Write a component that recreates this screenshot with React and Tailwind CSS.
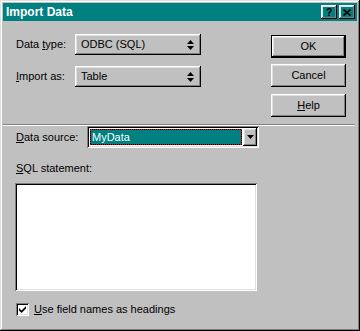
const raised =
  "shadow-[inset_-1px_-1px_#000,inset_1px_1px_#fff,inset_-2px_-2px_#808080,inset_2px_2px_#dfdfdf]";
const sunken =
  "shadow-[inset_1px_1px_#808080,inset_-1px_-1px_#fff,inset_2px_2px_#000,inset_-2px_-2px_#dfdfdf]";

function UpDown() {
  return (
    <svg width="7" height="10" viewBox="0 0 7 10" className="shrink-0">
      <path d="M3.5 0L7 4H0Z" fill="#000" />
      <path d="M0 6H7L3.5 10Z" fill="#000" />
    </svg>
  );
}

function Select({ value }) {
  return (
    <div className={`w-[126px] h-[21px] bg-[#c0c0c0] ${raised} flex items-center pl-[6px] pr-[7px]`}>
      <span className="flex-1">{value}</span>
      <UpDown />
    </div>
  );
}

function Button({ children, def }) {
  if (def) {
    return (
      <div className="w-[75px] h-[23px] border border-black">
        <div className={`h-full ${raised} flex items-center justify-center`}>{children}</div>
      </div>
    );
  }
  return (
    <div className={`w-[75px] h-[23px] ${raised} flex items-center justify-center`}>{children}</div>
  );
}

export default function App() {
  return (
    <div className="w-[360px] h-[331px] bg-[#c0c0c0] p-[3px] flex flex-col text-[11px] text-black font-['Liberation_Sans',Arial,sans-serif] shadow-[inset_-1px_-1px_#000,inset_1px_1px_#dfdfdf,inset_-2px_-2px_#808080,inset_2px_2px_#fff] leading-none">
      {/* title bar */}
      <div className="h-[18px] bg-[#008080] flex items-center pl-[3px] pr-[2px]">
        <span className="text-white font-bold text-[12px]">Import Data</span>
        <div className="ml-auto flex gap-[2px]">
          <div className={`w-[16px] h-[14px] ${raised} flex items-center justify-center font-bold text-[11px]`}>?</div>
          <div className={`w-[16px] h-[14px] ${raised} flex items-center justify-center`}>
            <svg width="8" height="7" viewBox="0 0 8 7">
              <path d="M0.5 0.5L7.5 6.5M7.5 0.5L0.5 6.5" stroke="#000" strokeWidth="1.6" />
            </svg>
          </div>
        </div>
      </div>

      {/* top section */}
      <div className="h-[103px] flex">
        <div className="pl-[13px] pt-[13px] flex flex-col gap-[11px]">
          <div className="flex items-center">
            <span className="w-[59px]">Data <span className="underline">t</span>ype:</span>
            <Select value="ODBC (SQL)" />
          </div>
          <div className="flex items-center">
            <span className="w-[59px]"><span className="underline">I</span>mport as:</span>
            <Select value="Table" />
          </div>
        </div>
        <div className="ml-auto pr-[11px] pt-[14px] flex flex-col">
          <Button def>OK</Button>
          <div className="mt-[6px]">
            <Button>Cancel</Button>
          </div>
          <div className="mt-[7px]">
            <Button><span><span className="underline">H</span>elp</span></Button>
          </div>
        </div>
      </div>

      {/* separator */}
      <div className="h-[2px] mr-[2px] border-t border-t-[#808080] border-b border-b-white" />

      {/* data source */}
      <div className="flex items-center h-[22px]">
        <span className="pl-[13px] w-[84px]"><span className="underline">D</span>ata source:</span>
        <div className={`w-[172px] h-[22px] bg-white ${sunken} p-[2px] flex`}>
          <div className="flex-1 p-[1px]">
            <div className="h-full p-[1px] bg-[conic-gradient(#e00000_25%,#000_0_50%,#e00000_0_75%,#000_0)] bg-[length:2px_2px]">
              <div className="h-full bg-[#008080] text-white flex items-center pl-[1px]">
                MyData
              </div>
            </div>
          </div>
          <div className={`w-[14px] h-[18px] bg-[#c0c0c0] ${raised} flex items-center justify-center`}>
            <svg width="7" height="4" viewBox="0 0 7 4">
              <path d="M0 0H7L3.5 4Z" fill="#000" />
            </svg>
          </div>
        </div>
      </div>

      {/* SQL statement */}
      <div className="mt-[13px] h-[14px] flex items-center pl-[13px]">
        <span><span className="underline">S</span>QL statement:</span>
      </div>
      <div className={`mt-[8px] ml-[12px] w-[242px] h-[108px] bg-white ${sunken}`} />

      {/* checkbox */}
      <div className="mt-[12px] pl-[13px] flex items-center gap-[5px]">
        <div className={`w-[13px] h-[13px] bg-white ${sunken} flex items-center justify-center`}>
          <svg width="7" height="7" viewBox="0 0 7 7">
            <path d="M0 2V4.5L2.5 7L7 2.5V0L2.5 4.5Z" fill="#000" />
          </svg>
        </div>
        <span><span className="underline">U</span>se field names as headings</span>
      </div>
    </div>
  );
}
